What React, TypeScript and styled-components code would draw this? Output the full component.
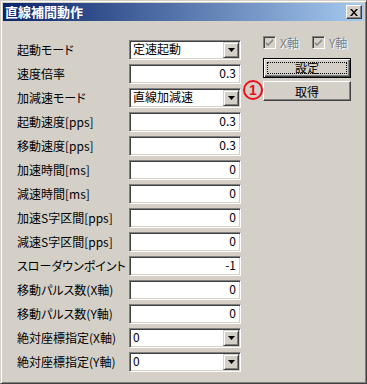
import React from 'react';
import styled, { createGlobalStyle } from 'styled-components';

const GlobalStyle = createGlobalStyle`
  html, body {
    margin: 0;
    padding: 0;
    background: #d4d0c8;
  }
  body {
    font-family: "Noto Sans CJK JP", "Liberation Sans", sans-serif;
    font-size: 12px;
    color: #000;
  }
`;

const Window = styled.div`
  box-sizing: border-box;
  width: 367px;
  height: 384px;
  background: #d4d0c8;
  border: 1px solid;
  border-color: #d4d0c8 #404040 #404040 #d4d0c8;
  box-shadow: inset 1px 1px #fff, inset -1px -1px #808080;
  padding: 2px;
  display: flex;
  flex-direction: column;
`;

const TitleBar = styled.div`
  height: 18px;
  background: linear-gradient(to right, #0a246a, #a6caf0);
  display: flex;
  align-items: center;
  justify-content: space-between;
  padding: 0 2px 0 2px;
`;

const Title = styled.span`
  color: #fff;
  font-weight: bold;
  font-size: 13px;
  line-height: 18px;
`;

const CloseButton = styled.div`
  box-sizing: border-box;
  width: 16px;
  height: 14px;
  background: #d4d0c8;
  border: 1px solid;
  border-color: #fff #404040 #404040 #fff;
  box-shadow: inset -1px -1px #808080;
  display: flex;
  align-items: center;
  justify-content: center;
`;

const Body = styled.div`
  position: relative;
  flex: 1;
  display: flex;
  padding: 15px 0 0 14px;
`;

const Form = styled.div`
  margin-top: 4px;
  display: grid;
  grid-template-columns: 112px 112px;
  grid-auto-rows: 20px;
  row-gap: 4px;
  align-items: center;
`;

const Label = styled.span`
  font-feature-settings: "palt";
  white-space: nowrap;
  line-height: 20px;
`;

const Sunken = styled.div<{ $align: 'left' | 'right' }>`
  box-sizing: border-box;
  height: 20px;
  background: #fff;
  border: 1px solid;
  border-color: #808080 #fff #fff #808080;
  box-shadow: inset 1px 1px #404040, inset -1px -1px #d4d0c8;
  display: flex;
  align-items: center;
  justify-content: ${({ $align }) => ($align === 'right' ? 'flex-end' : 'space-between')};
  padding: 1px 1px 1px 3px;
`;

const Value = styled.span<{ $right?: boolean }>`
  line-height: 16px;
  padding-right: ${({ $right }) => ($right ? '3px' : '0')};
  margin-top: -2px;
`;

const DropButton = styled.div`
  box-sizing: border-box;
  width: 16px;
  height: 16px;
  background: #d4d0c8;
  border: 1px solid;
  border-color: #d4d0c8 #404040 #404040 #d4d0c8;
  box-shadow: inset 1px 1px #fff, inset -1px -1px #808080;
  display: flex;
  align-items: center;
  justify-content: center;
`;

const Side = styled.div`
  margin-left: 22px;
  display: flex;
  flex-direction: column;
`;

const CheckRow = styled.div`
  display: flex;
  align-items: center;
  height: 13px;
`;

const CheckItem = styled.div`
  display: flex;
  align-items: center;
  gap: 4px;
  width: 49px;
`;

const CheckBox = styled.div`
  box-sizing: border-box;
  width: 13px;
  height: 13px;
  background: #d4d0c8;
  border: 1px solid;
  border-color: #808080 #fff #fff #808080;
  box-shadow: inset 1px 1px #404040, inset -1px -1px #d4d0c8;
  display: flex;
  align-items: center;
  justify-content: center;
`;

const DisabledText = styled.span`
  color: #808080;
  text-shadow: 1px 1px 0 #fff;
  line-height: 13px;
`;

const Buttons = styled.div`
  margin-top: 9px;
  display: flex;
  flex-direction: column;
  gap: 3px;
`;

const Button = styled.div<{ $default?: boolean }>`
  box-sizing: border-box;
  width: 88px;
  height: 20px;
  background: #d4d0c8;
  border: 1px solid;
  border-color: ${({ $default }) => ($default ? '#000' : '#fff #404040 #404040 #fff')};
  box-shadow: ${({ $default }) =>
    $default
      ? 'inset 1px 1px #fff, inset -1px -1px #404040, inset -2px -2px #808080'
      : 'inset -1px -1px #808080'};
  display: flex;
  align-items: center;
  justify-content: center;
  padding: 3px;
`;

const Focus = styled.div`
  box-sizing: border-box;
  width: 100%;
  height: 100%;
  border: 1px dotted #000;
  display: flex;
  align-items: center;
  justify-content: center;
  line-height: 12px;
`;

const Marker = styled.div`
  position: absolute;
  left: 240px;
  top: 59px;
  box-sizing: border-box;
  width: 20px;
  height: 20px;
  border: 2px solid #e8101a;
  border-radius: 50%;
  color: #e8101a;
  font-family: "Liberation Sans", sans-serif;
  font-weight: bold;
  font-size: 14px;
  line-height: 16px;
  text-align: center;
`;

type Row = { label: string; value: string; combo?: boolean };

const rows: Row[] = [
  { label: '起動モード', value: '定速起動', combo: true },
  { label: '速度倍率', value: '0.3' },
  { label: '加減速モード', value: '直線加減速', combo: true },
  { label: '起動速度[pps]', value: '0.3' },
  { label: '移動速度[pps]', value: '0.3' },
  { label: '加速時間[ms]', value: '0' },
  { label: '減速時間[ms]', value: '0' },
  { label: '加速S字区間[pps]', value: '0' },
  { label: '減速S字区間[pps]', value: '0' },
  { label: 'スローダウンポイント', value: '-1' },
  { label: '移動パルス数(X軸)', value: '0' },
  { label: '移動パルス数(Y軸)', value: '0' },
  { label: '絶対座標指定(X軸)', value: '0', combo: true },
  { label: '絶対座標指定(Y軸)', value: '0', combo: true },
];

const Arrow = () => (
  <svg width="7" height="4" viewBox="0 0 7 4">
    <path d="M0 0h7L3.5 4z" fill="#000" />
  </svg>
);

const Check = () => (
  <svg width="9" height="9" viewBox="0 0 9 9">
    <path d="M1 4l2 2 5-5v2L3 8 1 6z" fill="#808080" />
  </svg>
);

const App: React.FC = () => (
  <>
    <GlobalStyle />
    <Window>
      <TitleBar>
        <Title>直線補間動作</Title>
        <CloseButton>
          <svg width="8" height="7" viewBox="0 0 8 7">
            <path d="M0 0h2l2 2.5L6 0h2L5 3.5 8 7H6L4 4.5 2 7H0l3-3.5z" fill="#000" />
          </svg>
        </CloseButton>
      </TitleBar>
      <Body>
        <Form>
          {rows.map((row) => (
            <React.Fragment key={row.label}>
              <Label>{row.label}</Label>
              {row.combo ? (
                <Sunken $align="left">
                  <Value>{row.value}</Value>
                  <DropButton>
                    <Arrow />
                  </DropButton>
                </Sunken>
              ) : (
                <Sunken $align="right">
                  <Value $right>{row.value}</Value>
                </Sunken>
              )}
            </React.Fragment>
          ))}
        </Form>
        <Side>
          <CheckRow>
            <CheckItem>
              <CheckBox>
                <Check />
              </CheckBox>
              <DisabledText>X軸</DisabledText>
            </CheckItem>
            <CheckItem>
              <CheckBox>
                <Check />
              </CheckBox>
              <DisabledText>Y軸</DisabledText>
            </CheckItem>
          </CheckRow>
          <Buttons>
            <Button $default>
              <Focus>設定</Focus>
            </Button>
            <Button>取得</Button>
          </Buttons>
        </Side>
        <Marker>1</Marker>
      </Body>
    </Window>
  </>
);

export default App;
